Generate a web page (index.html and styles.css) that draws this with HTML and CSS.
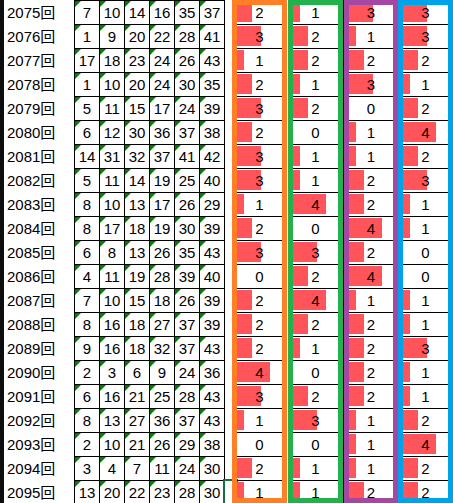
FILE: index.html
```html
<!DOCTYPE html>
<html lang="ja">
<head>
  <meta charset="UTF-8" />
  <title>ロト6 出目チェック</title>
  <link rel="stylesheet" href="styles.css">
</head>
<body>
  <div class="sheet">
    <div class="edge"></div>

    <div class="labels">
      <div>2075回</div><div>2076回</div><div>2077回</div><div>2078回</div>
      <div>2079回</div><div>2080回</div><div>2081回</div><div>2082回</div>
      <div>2083回</div><div>2084回</div><div>2085回</div><div>2086回</div>
      <div>2087回</div><div>2088回</div><div>2089回</div><div>2090回</div>
      <div>2091回</div><div>2092回</div><div>2093回</div><div>2094回</div>
      <div>2095回</div>
    </div>

    <div class="nums">
      <div>7</div><div>10</div><div>14</div><div>16</div><div>35</div><div>37</div>
      <div>1</div><div>9</div><div>20</div><div>22</div><div>28</div><div>41</div>
      <div>17</div><div>18</div><div>23</div><div>24</div><div>26</div><div>43</div>
      <div>1</div><div>10</div><div>20</div><div>24</div><div>30</div><div>35</div>
      <div>5</div><div>11</div><div>15</div><div>17</div><div>24</div><div>39</div>
      <div>6</div><div>12</div><div>30</div><div>36</div><div>37</div><div>38</div>
      <div>14</div><div>31</div><div>32</div><div>37</div><div>41</div><div>42</div>
      <div>5</div><div>11</div><div>14</div><div>19</div><div>25</div><div>40</div>
      <div>8</div><div>10</div><div>13</div><div>17</div><div>26</div><div>29</div>
      <div>8</div><div>17</div><div>18</div><div>19</div><div>30</div><div>39</div>
      <div>6</div><div>8</div><div>13</div><div>26</div><div>35</div><div>43</div>
      <div>4</div><div>11</div><div>19</div><div>28</div><div>39</div><div>40</div>
      <div>7</div><div>10</div><div>15</div><div>18</div><div>26</div><div>39</div>
      <div>8</div><div>16</div><div>18</div><div>27</div><div>37</div><div>39</div>
      <div>9</div><div>16</div><div>18</div><div>32</div><div>37</div><div>43</div>
      <div>2</div><div>3</div><div>6</div><div>9</div><div>24</div><div>36</div>
      <div>6</div><div>16</div><div>21</div><div>25</div><div>28</div><div>43</div>
      <div>8</div><div>13</div><div>27</div><div>36</div><div>37</div><div>43</div>
      <div>2</div><div>10</div><div>21</div><div>26</div><div>29</div><div>38</div>
      <div>3</div><div>4</div><div>7</div><div>11</div><div>24</div><div>30</div>
      <div>13</div><div>20</div><div>22</div><div>23</div><div>28</div><div>30</div>
    </div>

    <div class="gap">
      <div></div><div></div><div></div><div></div><div></div><div></div><div></div>
      <div></div><div></div><div></div><div></div><div></div><div></div><div></div>
      <div></div><div></div><div></div><div></div><div></div><div></div>
      <div class="active"></div>
    </div>

    <!-- 1〜10 -->
    <div class="col orange">
      <div class="v2">2</div><div class="v3">3</div><div class="v1">1</div><div class="v2">2</div>
      <div class="v3">3</div><div class="v2">2</div><div class="v3">3</div><div class="v3">3</div>
      <div class="v1">1</div><div class="v2">2</div><div class="v3">3</div><div>0</div>
      <div class="v2">2</div><div class="v2">2</div><div class="v2">2</div><div class="v4">4</div>
      <div class="v3">3</div><div class="v1">1</div><div>0</div><div class="v2">2</div>
      <div class="v1">1</div>
    </div>
    <div class="sep"></div>
    <!-- 11〜20 -->
    <div class="col green">
      <div class="v1">1</div><div class="v2">2</div><div class="v2">2</div><div class="v1">1</div>
      <div class="v2">2</div><div>0</div><div class="v1">1</div><div class="v1">1</div>
      <div class="v4">4</div><div>0</div><div class="v3">3</div><div class="v2">2</div>
      <div class="v4">4</div><div class="v2">2</div><div class="v1">1</div><div>0</div>
      <div class="v2">2</div><div class="v3">3</div><div>0</div><div class="v1">1</div>
      <div class="v1">1</div>
    </div>
    <div class="sep dark"></div>
    <!-- 21〜30 -->
    <div class="col purple">
      <div class="v3">3</div><div class="v1">1</div><div class="v2">2</div><div class="v3">3</div>
      <div>0</div><div class="v1">1</div><div class="v1">1</div><div class="v2">2</div>
      <div class="v2">2</div><div class="v4">4</div><div class="v2">2</div><div class="v4">4</div>
      <div class="v1">1</div><div class="v2">2</div><div class="v2">2</div><div class="v2">2</div>
      <div class="v2">2</div><div class="v1">1</div><div class="v1">1</div><div class="v1">1</div>
      <div class="v2">2</div>
    </div>
    <!-- 31〜43 -->
    <div class="col blue">
      <div class="v3">3</div><div class="v3">3</div><div class="v2">2</div><div class="v1">1</div>
      <div class="v2">2</div><div class="v4">4</div><div class="v2">2</div><div class="v3">3</div>
      <div class="v1">1</div><div class="v1">1</div><div>0</div><div>0</div>
      <div class="v1">1</div><div class="v1">1</div><div class="v3">3</div><div class="v1">1</div>
      <div class="v1">1</div><div class="v2">2</div><div class="v4">4</div><div class="v2">2</div>
      <div class="v2">2</div>
    </div>
  </div>
</body>
</html>
```

FILE: styles.css
```css
body {
  margin: 0;
  background: white;
  font-family: 'Liberation Sans', 'Noto Sans CJK JP', sans-serif;
  font-size: 15px;
  color: #000;
  overflow: hidden;
}

.sheet {
  display: flex;
  align-items: flex-start;
  width: 453px;
  height: 503px;
  overflow: hidden;
}

.edge {
  width: 4px;
  height: 100%;
  background: #0d0d0d;
}

.labels {
  width: 70px;
  padding-top: 1px;
}

.labels div {
  height: 24px;
  line-height: 23px;
  padding-left: 3px;
  white-space: nowrap;
}

/* picked numbers */
.nums {
  display: grid;
  grid-template-columns: repeat(6, 25px);
  grid-auto-rows: 24px;
  border-left: 1px solid #000;
  border-top: 1px solid #000;
}

.nums div {
  position: relative;
  border-right: 1px solid #000;
  border-bottom: 1px solid #000;
  line-height: 23px;
  text-align: center;
}

.nums div::before {
  content: '';
  position: absolute;
  left: 0;
  top: 0;
  border-top: 6px solid #008000;
  border-right: 6px solid transparent;
}

.gap {
  width: 7px;
  padding-top: 1px;
}

.gap div {
  height: 24px;
  position: relative;
}

.gap .active::after {
  content: '';
  position: absolute;
  left: -2px;
  top: -2px;
  right: -6px;
  bottom: -6px;
  border: 2px solid #1d6b3c;
}

/* count columns with data bars */
.col {
  position: relative;
  width: 55px;
  border-top: 1px solid #000;
}

.col div {
  box-sizing: border-box;
  height: 24px;
  line-height: 23px;
  text-align: center;
  border-bottom: 1px solid #000;
  background-repeat: no-repeat;
  background-position: 0 1px;
  background-image: linear-gradient(#ff555a, #ff555a);
  background-size: 0 20px;
}

.col .v1 { background-size: 12px 20px; }
.col .v2 { background-size: 20px 20px; }
.col .v3 { background-size: 29px 20px; }
.col .v4 { background-size: 38px 20px; }

.col::after {
  content: '';
  position: absolute;
  left: 0;
  right: 0;
  top: -1px;
  height: 503px;
  box-sizing: border-box;
  border: 5px solid;
  pointer-events: none;
}

.orange::after { border-color: #ff7f27; }
.green::after { border-color: #22b14c; }
.purple { width: 54px; }
.purple::after { border-color: #a349a4; }
.blue::after { border-color: #00a2e8; }

.sep {
  width: 1px;
  height: 100%;
}

.sep.dark { background: #000; }
```
